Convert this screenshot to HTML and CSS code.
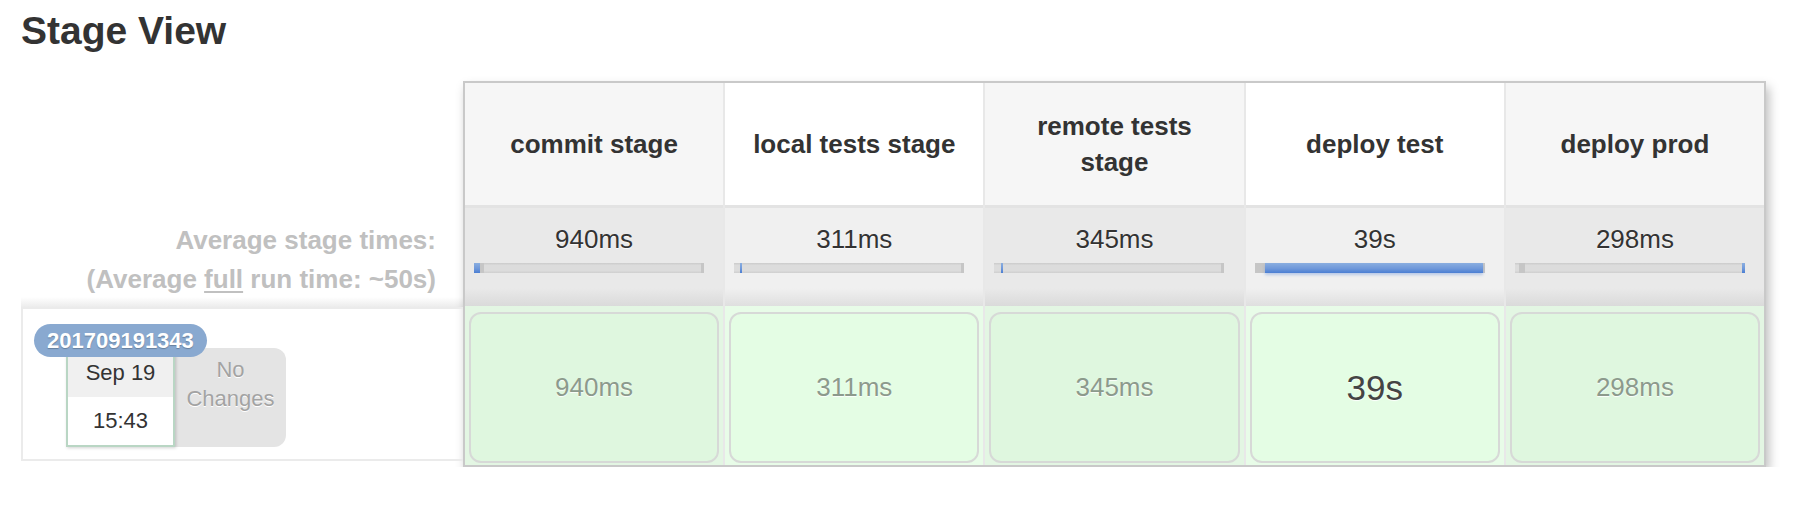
FILE: index.html
```html
<!DOCTYPE html>
<html>
<head>
<meta charset="utf-8">
<title>Stage View</title>
<link rel="stylesheet" href="styles.css">
</head>
<body>
<div class="page">
  <h2 class="title">Stage View</h2>
  <div class="stage-view">
    <div class="side">
      <div class="side-head"></div>
      <div class="avg-label">
        <div>Average stage times:</div>
        <div>(Average <u>full</u> run time: ~50s)</div>
      </div>
      <div class="side-shade"></div>
      <div class="build-row">
        <span class="badge">201709191343</span>
        <div class="date-card">
          <div class="date">Sep 19</div>
          <div class="time">15:43</div>
        </div>
        <div class="changes">No<br>Changes</div>
      </div>
    </div>
    <div class="table">
      <div class="head odd">commit stage</div>
      <div class="head even">local tests stage</div>
      <div class="head odd">remote tests<br>stage</div>
      <div class="head even">deploy test</div>
      <div class="head odd">deploy prod</div>

      <div class="avg odd">
        <div class="avg-time">940ms</div>
        <div class="track">
          <span class="seg blue" style="left:0;width:6px"></span>
          <span class="seg grey" style="left:6px;width:4px"></span>
        </div>
      </div>
      <div class="avg even">
        <div class="avg-time">311ms</div>
        <div class="track">
          <span class="seg blue" style="left:6px;width:2px"></span>
        </div>
      </div>
      <div class="avg odd">
        <div class="avg-time">345ms</div>
        <div class="track">
          <span class="seg blue" style="left:7px;width:2px"></span>
        </div>
      </div>
      <div class="avg even">
        <div class="avg-time">39s</div>
        <div class="track">
          <span class="seg grey" style="left:0;width:10px"></span>
          <span class="seg blue glow" style="left:10px;width:218px"></span>
        </div>
      </div>
      <div class="avg odd">
        <div class="avg-time">298ms</div>
        <div class="track">
          <span class="seg grey" style="left:4px;width:6px"></span>
          <span class="seg blue" style="left:227px;width:3px"></span>
        </div>
      </div>

      <div class="cell odd"><div class="box">940ms</div></div>
      <div class="cell even"><div class="box">311ms</div></div>
      <div class="cell odd"><div class="box">345ms</div></div>
      <div class="cell even"><div class="box big">39s</div></div>
      <div class="cell odd"><div class="box">298ms</div></div>
    </div>
  </div>
</div>
</body>
</html>
```

FILE: styles.css
```css
html, body {
  margin: 0;
  padding: 0;
  background: #ffffff;
}

body {
  font-family: "Liberation Sans", Arial, Helvetica, sans-serif;
  color: #333333;
}

.page {
  padding: 8px 0 0 21px;
}

.title {
  margin: 0;
  font-size: 39px;
  line-height: 46px;
  font-weight: bold;
  color: #333333;
}

.stage-view {
  display: flex;
  align-items: flex-start;
  margin-top: 27px;
}

/* ---------- left side ---------- */
.side {
  width: 442px;
  flex: none;
  display: flex;
  flex-direction: column;
}

.side-head {
  height: 127px;
}

.avg-label {
  height: 89px;
  box-sizing: border-box;
  padding: 13px 27px 0 0;
  text-align: right;
  font-size: 26px;
  line-height: 39px;
  font-weight: bold;
  color: #c0c0c0;
}

.avg-label u {
  text-decoration-thickness: 2px;
  text-underline-offset: 3px;
}

.side-shade {
  height: 10px;
  background: linear-gradient(to bottom, rgba(235, 235, 235, 0), #ececec);
}

.build-row {
  position: relative;
  height: 154px;
  box-sizing: border-box;
  border: 2px solid #ebebeb;
  border-right: none;
  padding: 37px 0 0 43px;
  display: flex;
  align-items: flex-start;
}

.badge {
  position: absolute;
  left: 11px;
  top: 15px;
  z-index: 3;
  height: 33px;
  line-height: 33px;
  padding: 0 13px;
  border-radius: 17px;
  background: #89a9d0;
  color: #ffffff;
  font-size: 22px;
  font-weight: bold;
  text-shadow: 0 1px 1px rgba(0, 0, 0, 0.25);
}

.date-card {
  position: relative;
  z-index: 2;
  width: 109px;
  box-sizing: border-box;
  border: 2px solid #b9d6c4;
  background: #ffffff;
  box-shadow: 1px 1px 3px rgba(0, 0, 0, 0.18);
  font-size: 22px;
  text-align: center;
  color: #333333;
}

.date {
  height: 49px;
  line-height: 49px;
  background: #f0f0f0;
}

.time {
  height: 48px;
  line-height: 48px;
}

.changes {
  width: 111px;
  height: 99px;
  margin-top: 2px;
  box-sizing: border-box;
  padding-top: 7px;
  border-radius: 0 12px 12px 0;
  background: #e4e4e4;
  text-align: center;
  font-size: 22px;
  line-height: 29px;
  color: #a3a3a3;
  text-shadow: 0 1px 0 #ffffff;
}

/* ---------- stage table ---------- */
.table {
  width: 1303px;
  flex: none;
  box-sizing: border-box;
  border: 2px solid #c9c9c9;
  box-shadow: 3px 6px 10px rgba(0, 0, 0, 0.26);
  display: grid;
  grid-template-columns: repeat(5, 1fr);
  grid-template-rows: 125px 98px 159px;
  column-gap: 2px;
  background: #e8e8e8;
}

.head {
  display: flex;
  align-items: center;
  justify-content: center;
  text-align: center;
  font-size: 26px;
  line-height: 36px;
  font-weight: bold;
  color: #333333;
  border-bottom: 3px solid #e3e3e3;
  padding-bottom: 1px;
}

.head.odd {
  background: #f6f6f6;
}

.head.even {
  background: #ffffff;
}

.avg {
  box-sizing: border-box;
  padding: 16px 0 0 9px;
}

.avg.odd {
  background: linear-gradient(to bottom, #e9e9e9 0, #e9e9e9 82%, #dadada 100%);
}

.avg.even {
  background: linear-gradient(to bottom, #f0f0f0 0, #f0f0f0 82%, #dfdfdf 100%);
}

.avg-time {
  padding-right: 9px;
  text-align: center;
  font-size: 26px;
  line-height: 30px;
  color: #333333;
  text-shadow: 0 1px 1px rgba(255, 255, 255, 0.8);
}

.track {
  position: relative;
  width: 230px;
  height: 10px;
  margin-top: 9px;
  background: linear-gradient(to bottom, #cbcbcb 0, #dcdcdc 25%, #dcdcdc 75%, #cfcfcf 100%);
  box-shadow: inset -3px 0 0 #c6c6c6;
}

.seg {
  position: absolute;
  top: 0;
  height: 10px;
}

.seg.blue {
  background: linear-gradient(to bottom, #8aaee0 0, #6f98da 55%, #4b7fd3 100%);
}

.seg.grey {
  background: #c6c6c6;
}

.seg.glow {
  box-shadow: 0 2px 3px rgba(80, 130, 215, 0.35);
}

.cell {
  box-sizing: border-box;
  padding: 6px 4px 2px 4px;
  display: flex;
}

.cell.odd {
  background: #e3f6e3;
}

.cell.even {
  background: #e8fce8;
}

.box {
  flex: 1;
  display: flex;
  align-items: center;
  justify-content: center;
  box-sizing: border-box;
  border: 2px solid #d7d9d7;
  border-radius: 12px;
  font-size: 26px;
  color: #8c9a8c;
  text-shadow: 0 1px 1px rgba(255, 255, 255, 0.9);
}

.cell.odd .box {
  background: #dff7df;
}

.cell.even .box {
  background: #e4fde4;
}

.box.big {
  font-size: 35px;
  color: #444444;
}
```
